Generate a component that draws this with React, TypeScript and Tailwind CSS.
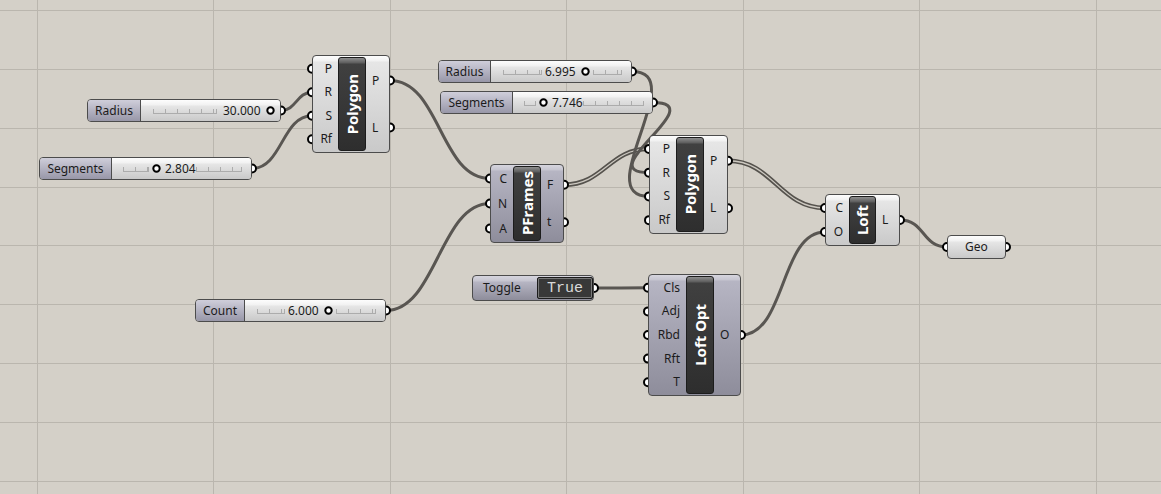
import type { ReactNode } from "react";

type Pt = [number, number];

interface Comp {
  x: number;
  y: number;
  w: number;
  h: number;
  leftW: number;
  barW: number;
  name: string;
  inputs: string[];
  outputs: string[];
  purple?: boolean;
}

const LIGHT =
  "bg-[linear-gradient(to_bottom,#fdfdfd_0px,#f1f1f1_5px,#e6e6e6_6px,#c9c9c9_100%)]";
const PURPLE =
  "bg-[linear-gradient(to_bottom,#d6d5de_0px,#c6c5d0_5px,#b6b5c3_6px,#8e8d9b_100%)]";

const poly1: Comp = { x: 312, y: 55, w: 78, h: 98, leftW: 25, barW: 28, name: "Polygon", inputs: ["P", "R", "S", "Rf"], outputs: ["P", "L"] };
const pframes: Comp = { x: 490, y: 164, w: 74, h: 79, leftW: 22, barW: 28, name: "PFrames", inputs: ["C", "N", "A"], outputs: ["F", "t"], purple: true };
const poly2: Comp = { x: 649, y: 135, w: 79, h: 99, leftW: 26, barW: 28, name: "Polygon", inputs: ["P", "R", "S", "Rf"], outputs: ["P", "L"] };
const loftOpt: Comp = { x: 648, y: 274, w: 93, h: 122, leftW: 37, barW: 28, name: "Loft Opt", inputs: ["Cls", "Adj", "Rbd", "Rft", "T"], outputs: ["O"], purple: true };
const loft: Comp = { x: 825, y: 194, w: 75, h: 52, leftW: 23, barW: 27, name: "Loft", inputs: ["C", "O"], outputs: ["L"] };

const comps = [poly1, pframes, poly2, loftOpt, loft];

function inPin(c: Comp, i: number): Pt {
  return [c.x, c.y + 2 + ((c.h - 4) * (i + 0.5)) / c.inputs.length];
}
function outPin(c: Comp, i: number): Pt {
  return [c.x + c.w, c.y + 2 + ((c.h - 4) * (i + 0.5)) / c.outputs.length];
}

// slider / param boxes
const sRadius1 = { x: 87, y: 99, w: 194, h: 23 };
const sSeg1 = { x: 39, y: 157, w: 213, h: 23 };
const sCount = { x: 195, y: 299, w: 191, h: 23 };
const sRadius2 = { x: 438, y: 60, w: 194, h: 23 };
const sSeg2 = { x: 440, y: 91, w: 213, h: 23 };
const toggle = { x: 472, y: 275, w: 122, h: 26 };
const geo = { x: 947, y: 235, w: 59, h: 24 };

const boxOut = (b: { x: number; y: number; w: number; h: number }): Pt => [b.x + b.w, b.y + b.h / 2];
const boxIn = (b: { x: number; y: number; w: number; h: number }): Pt => [b.x, b.y + b.h / 2];

const wires: { a: Pt; b: Pt; k: number; double?: boolean }[] = [
  { a: boxOut(sRadius1), b: inPin(poly1, 1), k: 15 },
  { a: boxOut(sSeg1), b: inPin(poly1, 2), k: 30 },
  { a: outPin(poly1, 0), b: inPin(pframes, 0), k: 50 },
  { a: boxOut(sCount), b: inPin(pframes, 1), k: 50 },
  { a: outPin(pframes, 0), b: inPin(poly2, 0), k: 40, double: true },
  { a: boxOut(sRadius2), b: inPin(poly2, 2), k: 60 },
  { a: boxOut(sSeg2), b: inPin(poly2, 1), k: 60 },
  { a: outPin(poly2, 0), b: inPin(loft, 0), k: 45, double: true },
  { a: boxOut(toggle), b: inPin(loftOpt, 0), k: 20 },
  { a: outPin(loftOpt, 0), b: inPin(loft, 1), k: 45 },
  { a: outPin(loft, 0), b: boxIn(geo), k: 25 },
];

function wirePath(a: Pt, b: Pt, k: number) {
  return `M ${a[0]} ${a[1]} C ${a[0] + k} ${a[1]}, ${b[0] - k} ${b[1]}, ${b[0]} ${b[1]}`;
}

const gridX = [37, 213, 390, 566, 743, 919, 1096];
const gridY = [10, 69, 128, 187, 245, 304, 363, 422, 481];

function Component({ c }: { c: Comp }) {
  return (
    <div
      className={`absolute flex rounded-[4px] border border-[#4c4c4c] py-px ${c.purple ? PURPLE : LIGHT}`}
      style={{ left: c.x, top: c.y, width: c.w, height: c.h }}
    >
      <div className="flex flex-col pr-[6px]" style={{ width: c.leftW }}>
        {c.inputs.map((l) => (
          <div key={l} className="flex flex-1 items-center justify-end text-[12px] leading-none text-[#1b1b1b]">
            {l}
          </div>
        ))}
      </div>
      <div
        className="flex items-center justify-center rounded-[3px] border border-[#1c1c1c] bg-[linear-gradient(to_bottom,#8e8e8e_0px,#5c5c5c_5px,#404040_6px,#2e2e2e_100%)]"
        style={{ width: c.barW }}
      >
        <span className="rotate-180 text-[15px] font-bold leading-none whitespace-nowrap text-white [writing-mode:vertical-rl]">
          {c.name}
        </span>
      </div>
      <div className="flex flex-1 flex-col pl-[6px]">
        {c.outputs.map((l) => (
          <div key={l} className="flex flex-1 items-center text-[12px] leading-none text-[#1b1b1b]">
            {l}
          </div>
        ))}
      </div>
    </div>
  );
}

function Track({ w }: { w: number }) {
  const ticks: number[] = [];
  for (let t = 0; t <= w; t += 12) ticks.push(t);
  if (ticks[ticks.length - 1] !== w) ticks.push(w);
  return (
    <svg width={w + 1} height={8} className="shrink-0">
      <line x1={0} y1={6.5} x2={w + 1} y2={6.5} stroke="#acacac" />
      {ticks.map((t) => (
        <line key={t} x1={t + 0.5} y1={2} x2={t + 0.5} y2={7} stroke="#acacac" />
      ))}
    </svg>
  );
}

function Knob({ className = "" }: { className?: string }) {
  return (
    <svg width={9} height={9} className={`shrink-0 ${className}`}>
      <circle cx={4.5} cy={4.5} r={3.2} fill="#ffffff" stroke="#000000" strokeWidth={2} />
    </svg>
  );
}

function Val({ v, className = "" }: { v: string; className?: string }) {
  return <span className={`shrink-0 text-[12px] leading-none text-[#1b1b1b] ${className}`}>{v}</span>;
}

function Slider({
  b,
  label,
  labelW,
  children,
}: {
  b: { x: number; y: number; w: number; h: number };
  label: string;
  labelW: number;
  children: ReactNode;
}) {
  return (
    <div
      className="absolute flex overflow-hidden rounded-[4px] border border-[#4c4c4c]"
      style={{ left: b.x, top: b.y, width: b.w, height: b.h }}
    >
      <div
        className="flex items-center justify-center border-r border-[#4c4c4c] bg-[linear-gradient(to_bottom,#cfceda_0px,#b3b2c1_50%,#9897a8_100%)] text-[12px] leading-none text-[#1b1b1b]"
        style={{ width: labelW }}
      >
        {label}
      </div>
      <div className={`flex flex-1 items-center ${LIGHT}`}>{children}</div>
    </div>
  );
}

export default function App() {
  return (
    <div className="relative h-[494px] w-[1161px] overflow-hidden bg-[#d4d0c8] font-['Noto_Sans',sans-serif]">
      <svg className="absolute inset-0" width={1161} height={494}>
        {gridX.map((x) => (
          <line key={`x${x}`} x1={x + 0.5} y1={0} x2={x + 0.5} y2={494} stroke="#bab6ae" />
        ))}
        {gridY.map((y) => (
          <line key={`y${y}`} x1={0} y1={y + 0.5} x2={1161} y2={y + 0.5} stroke="#bab6ae" />
        ))}
      </svg>

      <svg className="absolute inset-0" width={1161} height={494} fill="none">
        {wires.map((w, i) =>
          w.double ? (
            <g key={i}>
              <path d={wirePath(w.a, w.b, w.k)} stroke="#55524d" strokeWidth={4.6} />
              <path d={wirePath(w.a, w.b, w.k)} stroke="#cdc9c1" strokeWidth={1.3} />
            </g>
          ) : (
            <path key={i} d={wirePath(w.a, w.b, w.k)} stroke="#595652" strokeWidth={3} />
          ),
        )}
      </svg>

      <Slider b={sRadius1} label="Radius" labelW={53}>
        <div className="w-[12px] shrink-0" />
        <Track w={63} />
        <Val v="30.000" className="ml-[6px]" />
        <Knob className="ml-[5px]" />
      </Slider>

      <Slider b={sSeg1} label="Segments" labelW={72}>
        <div className="w-[11px] shrink-0" />
        <Track w={25} />
        <Knob className="ml-[3px]" />
        <Val v="2.804" className="ml-[4px]" />
        <Track w={45} />
      </Slider>

      <Slider b={sCount} label="Count" labelW={49}>
        <div className="w-[12px] shrink-0" />
        <Track w={27} />
        <Val v="6.000" className="ml-[3px]" />
        <Knob className="ml-[5px]" />
        <div className="w-[3px] shrink-0" />
        <Track w={39} />
      </Slider>

      <Slider b={sRadius2} label="Radius" labelW={52}>
        <div className="w-[12px] shrink-0" />
        <Track w={38} />
        <Val v="6.995" className="ml-[3px]" />
        <Knob className="ml-[5px]" />
        <div className="w-[3px] shrink-0" />
        <Track w={28} />
      </Slider>

      <Slider b={sSeg2} label="Segments" labelW={72}>
        <div className="w-[11px] shrink-0" />
        <Track w={11} />
        <Knob className="ml-[3px]" />
        <Val v="7.746" className="ml-[4px]" />
        <Track w={60} />
      </Slider>

      {/* boolean toggle */}
      <div
        className={`absolute flex items-center rounded-[4px] border border-[#4c4c4c] ${PURPLE}`}
        style={{ left: toggle.x, top: toggle.y, width: toggle.w, height: toggle.h }}
      >
        <span className="ml-[10px] text-[12px] leading-none text-[#1b1b1b]">Toggle</span>
        <div className="ml-auto flex h-[22px] w-[56px] items-center justify-center rounded-[2px] border border-[#1c1c1c] bg-[#383838] font-['Liberation_Mono',monospace] text-[15px] leading-none text-[#d8d8d8] shadow-[inset_0_0_0_1px_#7a7a7a]">
          True
        </div>
      </div>

      {/* geometry param */}
      <div
        className={`absolute flex items-center justify-center rounded-[4px] border border-[#4c4c4c] ${LIGHT} text-[12px] leading-none text-[#1b1b1b]`}
        style={{ left: geo.x, top: geo.y, width: geo.w, height: geo.h }}
      >
        Geo
      </div>

      {comps.map((c, i) => (
        <Component key={i} c={c} />
      ))}

      {/* grips */}
      <svg className="absolute inset-0" width={1161} height={494}>
        {[
          ...comps.flatMap((c) => c.inputs.map((_, i) => ({ p: inPin(c, i), out: false }))),
          ...comps.flatMap((c) => c.outputs.map((_, i) => ({ p: outPin(c, i), out: true }))),
          ...[sRadius1, sSeg1, sCount, sRadius2, sSeg2, toggle, geo].map((b) => ({ p: boxOut(b), out: true })),
          { p: boxIn(geo), out: false },
        ].map((g, i) => (
          <path
            key={i}
            d={`M ${g.p[0]} ${g.p[1] - 4} A 4 4 0 0 ${g.out ? 1 : 0} ${g.p[0]} ${g.p[1] + 4}`}
            fill="#ffffff"
            stroke="#000000"
            strokeWidth={2}
          />
        ))}
      </svg>
    </div>
  );
}
